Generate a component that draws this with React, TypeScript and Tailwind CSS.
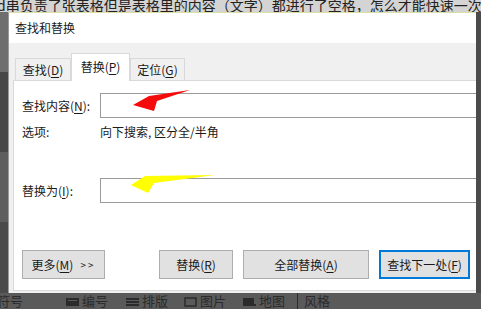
import React from "react";

const font = { fontFamily: '"Noto Sans CJK SC", "Noto Sans", sans-serif' };

function Tab({ label, k, selected }: { label: string; k: string; selected?: boolean }) {
  if (selected) {
    return (
      <div className="relative z-10 -mb-px flex h-[28px] w-[59px] items-start justify-center border border-b-0 border-[#d9d9d9] bg-white pt-[5px] text-[12px] leading-[16px] text-[#1a1a1a]">
        替换(<u className="underline-offset-2">{k}</u>)
      </div>
    );
  }
  return (
    <div className="flex h-[22px] items-center justify-center border border-b-0 border-[#d9d9d9] bg-[#f0f0f0] text-[12px] leading-[16px] text-[#1a1a1a]" style={{ width: label === "查找" ? 56 : 55 }}>
      {label}(<u className="underline-offset-2">{k}</u>)
    </div>
  );
}

function Btn({ children, w, primary }: { children: React.ReactNode; w: number; primary?: boolean }) {
  return (
    <div
      className={
        primary
          ? "flex h-[29px] items-center justify-center border-2 border-[#0078d7] bg-[#e1e1e1] text-[12px] text-[#1a1a1a]"
          : "flex h-[29px] items-center justify-center border border-[#adadad] bg-[#e1e1e1] text-[12px] text-[#1a1a1a]"
      }
      style={{ width: w }}
    >
      {children}
    </div>
  );
}

function ToolIcon({ kind }: { kind: number }) {
  return (
    <svg width="13" height="11" viewBox="0 0 13 11" className="mr-[3px]">
      {kind === 0 && (
        <g fill="#2b2b2b">
          <rect x="0" y="2" width="13" height="8" />
          <rect x="2" y="4" width="9" height="1" fill="#5a5a5a" />
        </g>
      )}
      {kind === 1 && (
        <g fill="#2b2b2b">
          <rect x="0" y="2" width="13" height="2" />
          <rect x="0" y="5" width="13" height="2" />
          <rect x="0" y="8" width="13" height="2" />
        </g>
      )}
      {kind === 2 && (
        <g fill="none" stroke="#2b2b2b" strokeWidth="1.5">
          <rect x="1" y="2" width="11" height="8" />
        </g>
      )}
      {kind === 3 && (
        <g fill="#2b2b2b">
          <rect x="0" y="2" width="11" height="8" />
          <rect x="11" y="8" width="2" height="2" />
        </g>
      )}
    </svg>
  );
}

export default function App() {
  return (
    <div className="relative h-[309px] w-[481px] overflow-hidden bg-[#4b4b4b]" style={font}>
      {/* background document */}
      <div className="flex h-full flex-col">
        <div className="h-[12px] overflow-hidden whitespace-nowrap bg-[#d4d4d4] pl-0 text-[14px] leading-[12px] text-[#222]">
          <span className="relative -left-[3px] -top-[1px]">d串负责了张表格但是表格里的内容（文字）都进行了空格，怎么才能快速一次</span>
        </div>
        <div className="flex flex-1">
          <div className="flex w-[8px] flex-col bg-[#525252]">
            <div className="h-[60px] bg-[#6e6e6e]" />
            <div className="h-[80px] bg-[#474747]" />
            <div className="h-[70px] bg-[#5e5e5e]" />
            <div className="flex-1 bg-[#4a4a4a]" />
          </div>
          <div className="flex-1" />
        </div>
        <div className="flex h-[16px] items-center overflow-hidden whitespace-nowrap bg-[#5a5a5a] text-[13px] leading-[14px] text-[#2b2b2b]">
          <span className="relative -left-[3px] mr-[40px]">符号</span>
          <ToolIcon kind={0} />
          <span className="mr-[18px]">编号</span>
          <ToolIcon kind={1} />
          <span className="mr-[16px]">排版</span>
          <ToolIcon kind={2} />
          <span className="mr-[17px]">图片</span>
          <ToolIcon kind={3} />
          <span className="mr-[12px]">地图</span>
          <div className="mr-[6px] h-[16px] w-px bg-[#2b2b2b]" />
          <span>风格</span>
        </div>
      </div>

      {/* dialog window */}
      <div className="absolute left-[8px] top-[12px] flex h-[281px] w-[468px] flex-col border-l border-t border-[#9a9a9a] border-t-[#d8e0a8] bg-[#f0f0f0] text-[#1a1a1a]">
        <div className="flex h-[30px] items-center bg-white pl-[6px] text-[12px]">查找和替换</div>
        <div className="flex flex-1 flex-col pb-[2px] pl-[4px] pt-[10px]">
          <div className="flex h-[27px] items-end pl-[2px]">
            <Tab label="查找" k="D" />
            <Tab label="替换" k="P" selected />
            <Tab label="定位" k="G" />
          </div>
          <div className="flex flex-1 flex-col border border-r-0 border-[#d9d9d9] bg-white pl-[8px] text-[12px]">
            <div className="mt-[12px] flex h-[25px] items-center">
              <div className="w-[78px]">查找内容(<u className="underline-offset-2">N</u>):</div>
              <div className="h-[25px] flex-1 border border-r-0 border-[#9a9a9a] bg-white" />
            </div>
            <div className="mt-[6px] flex h-[16px] items-center">
              <div className="w-[78px]">选项:</div>
              <div>向下搜索, 区分全/半角</div>
            </div>
            <div className="mt-[38px] flex h-[25px] items-center">
              <div className="w-[78px]">替换为(<u className="underline-offset-2">I</u>):</div>
              <div className="h-[25px] flex-1 border border-r-0 border-[#9a9a9a] bg-white" />
            </div>
            <div className="flex-1" />
            <div className="mb-[11px] flex items-center pr-[4px]">
              <Btn w={83}>
                更多(<u className="underline-offset-2">M</u>)
                <span className="ml-[7px] text-[10px] tracking-[2px]">&gt;&gt;</span>
              </Btn>
              <div className="w-[54px]" />
              <Btn w={74}>
                替换(<u className="underline-offset-2">R</u>)
              </Btn>
              <div className="w-[10px]" />
              <Btn w={126}>
                全部替换(<u className="underline-offset-2">A</u>)
              </Btn>
              <div className="w-[10px]" />
              <Btn w={91} primary>
                查找下一处(<u className="underline-offset-2">F</u>)
              </Btn>
            </div>
          </div>
        </div>
      </div>

      {/* annotation arrows */}
      <svg className="pointer-events-none absolute left-0 top-0" width="481" height="309" viewBox="0 0 481 309">
        <polygon points="133,105 149,96 190,90 157,101 154,111" fill="#f40c0c" />
        <polygon points="131,185 145,176 215,175 154,183 148,193" fill="#ffff00" />
      </svg>
    </div>
  );
}
